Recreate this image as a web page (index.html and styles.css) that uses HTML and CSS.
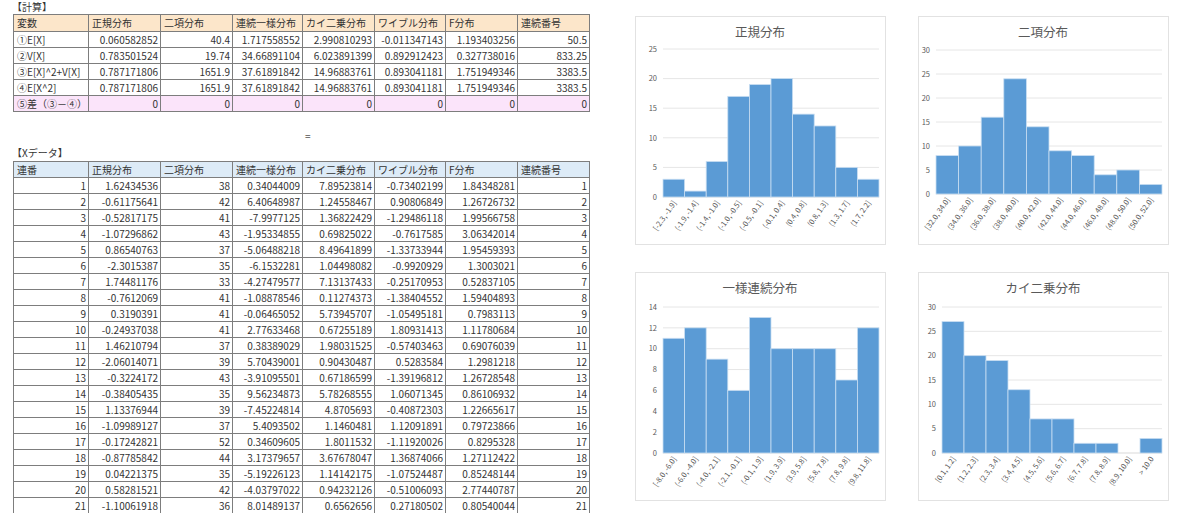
FILE: index.html
```html
<!DOCTYPE html>
<html lang="ja">
<head>
<meta charset="utf-8">
<title>分布</title>
<link rel="stylesheet" href="styles.css">
</head>
<body>
<div class="page">
  <section class="sheet">
    <div class="caption">【計算】</div>
    <table class="grid calc">
      <colgroup><col class="c1"><col class="c2"><col class="c3"><col class="c4"><col class="c5"><col class="c6"><col class="c7"><col class="c8"></colgroup>
      <thead>
        <tr><th>変数</th><th>正規分布</th><th>二項分布</th><th>連続一様分布</th><th>カイ二乗分布</th><th>ワイブル分布</th><th>F分布</th><th>連続番号</th></tr>
      </thead>
      <tbody>
        <tr><td class="l">①E[X]</td><td>0.060582852</td><td>40.4</td><td>1.717558552</td><td>2.990810293</td><td>-0.011347143</td><td>1.193403256</td><td>50.5</td></tr>
        <tr><td class="l">②V[X]</td><td>0.783501524</td><td>19.74</td><td>34.66891104</td><td>6.023891399</td><td>0.892912423</td><td>0.327738016</td><td>833.25</td></tr>
        <tr><td class="l">③E[X]^2+V[X]</td><td>0.787171806</td><td>1651.9</td><td>37.61891842</td><td>14.96883761</td><td>0.893041181</td><td>1.751949346</td><td>3383.5</td></tr>
        <tr><td class="l">④E[X^2]</td><td>0.787171806</td><td>1651.9</td><td>37.61891842</td><td>14.96883761</td><td>0.893041181</td><td>1.751949346</td><td>3383.5</td></tr>
        <tr class="diff"><td class="l">⑤差（③－④）</td><td>0</td><td>0</td><td>0</td><td>0</td><td>0</td><td>0</td><td>0</td></tr>
      </tbody>
    </table>
    <div class="eq">=</div>
    <div class="caption caption-x">【Xデータ】</div>
    <table class="grid xdata">
      <colgroup><col class="c1"><col class="c2"><col class="c3"><col class="c4"><col class="c5"><col class="c6"><col class="c7"><col class="c8"></colgroup>
      <thead>
        <tr><th>連番</th><th>正規分布</th><th>二項分布</th><th>連続一様分布</th><th>カイ二乗分布</th><th>ワイブル分布</th><th>F分布</th><th>連続番号</th></tr>
      </thead>
      <tbody>
        <tr><td>1</td><td>1.62434536</td><td>38</td><td>0.34044009</td><td>7.89523814</td><td>-0.73402199</td><td>1.84348281</td><td>1</td></tr>
        <tr><td>2</td><td>-0.61175641</td><td>42</td><td>6.40648987</td><td>1.24558467</td><td>0.90806849</td><td>1.26726732</td><td>2</td></tr>
        <tr><td>3</td><td>-0.52817175</td><td>41</td><td>-7.9977125</td><td>1.36822429</td><td>-1.29486118</td><td>1.99566758</td><td>3</td></tr>
        <tr><td>4</td><td>-1.07296862</td><td>43</td><td>-1.95334855</td><td>0.69825022</td><td>-0.7617585</td><td>3.06342014</td><td>4</td></tr>
        <tr><td>5</td><td>0.86540763</td><td>37</td><td>-5.06488218</td><td>8.49641899</td><td>-1.33733944</td><td>1.95459393</td><td>5</td></tr>
        <tr><td>6</td><td>-2.3015387</td><td>35</td><td>-6.1532281</td><td>1.04498082</td><td>-0.9920929</td><td>1.3003021</td><td>6</td></tr>
        <tr><td>7</td><td>1.74481176</td><td>33</td><td>-4.27479577</td><td>7.13137433</td><td>-0.25170953</td><td>0.52837105</td><td>7</td></tr>
        <tr><td>8</td><td>-0.7612069</td><td>41</td><td>-1.08878546</td><td>0.11274373</td><td>-1.38404552</td><td>1.59404893</td><td>8</td></tr>
        <tr><td>9</td><td>0.3190391</td><td>41</td><td>-0.06465052</td><td>5.73945707</td><td>-1.05495181</td><td>0.7983113</td><td>9</td></tr>
        <tr><td>10</td><td>-0.24937038</td><td>41</td><td>2.77633468</td><td>0.67255189</td><td>1.80931413</td><td>1.11780684</td><td>10</td></tr>
        <tr><td>11</td><td>1.46210794</td><td>37</td><td>0.38389029</td><td>1.98031525</td><td>-0.57403463</td><td>0.69076039</td><td>11</td></tr>
        <tr><td>12</td><td>-2.06014071</td><td>39</td><td>5.70439001</td><td>0.90430487</td><td>0.5283584</td><td>1.2981218</td><td>12</td></tr>
        <tr><td>13</td><td>-0.3224172</td><td>43</td><td>-3.91095501</td><td>0.67186599</td><td>-1.39196812</td><td>1.26728548</td><td>13</td></tr>
        <tr><td>14</td><td>-0.38405435</td><td>35</td><td>9.56234873</td><td>5.78268555</td><td>1.06071345</td><td>0.86106932</td><td>14</td></tr>
        <tr><td>15</td><td>1.13376944</td><td>39</td><td>-7.45224814</td><td>4.8705693</td><td>-0.40872303</td><td>1.22665617</td><td>15</td></tr>
        <tr><td>16</td><td>-1.09989127</td><td>37</td><td>5.4093502</td><td>1.1460481</td><td>1.12091891</td><td>0.79723866</td><td>16</td></tr>
        <tr><td>17</td><td>-0.17242821</td><td>52</td><td>0.34609605</td><td>1.8011532</td><td>-1.11920026</td><td>0.8295328</td><td>17</td></tr>
        <tr><td>18</td><td>-0.87785842</td><td>44</td><td>3.17379657</td><td>3.67678047</td><td>1.36874066</td><td>1.27112422</td><td>18</td></tr>
        <tr><td>19</td><td>0.04221375</td><td>35</td><td>-5.19226123</td><td>1.14142175</td><td>-1.07524487</td><td>0.85248144</td><td>19</td></tr>
        <tr><td>20</td><td>0.58281521</td><td>42</td><td>-4.03797022</td><td>0.94232126</td><td>-0.51006093</td><td>2.77440787</td><td>20</td></tr>
        <tr><td>21</td><td>-1.10061918</td><td>36</td><td>8.01489137</td><td>0.6562656</td><td>0.27180502</td><td>0.80540044</td><td>21</td></tr>
      </tbody>
    </table>
  </section>
  <section class="charts">
    <div class="card" data-chart="0"></div>
    <div class="card" data-chart="1"></div>
    <div class="card" data-chart="2"></div>
    <div class="card" data-chart="3"></div>
  </section>
</div>
<script src="app.js"></script>
</body>
</html>
```

FILE: styles.css
```css
* { box-sizing: border-box; }
html, body { margin: 0; padding: 0; background: #fff; }
body {
  font-family: "Noto Sans CJK JP", "Noto Sans", sans-serif;
  color: #333;
  font-size: 10px;
  overflow: hidden;
}
.page {
  display: flex;
  align-items: flex-start;
  width: 1200px;
  height: 513px;
}
.sheet {
  width: 589px;
  padding-left: 13px;
  flex: none;
}
.caption {
  height: 14px;
  line-height: 14px;
  font-size: 10px;
  color: #333;
  margin-left: -1px;
}
.caption-x {
  height: 17px;
  line-height: 17px;
}
.eq {
  height: 16px;
  line-height: 16px;
  margin-top: 16px;
  padding-left: 292px;
  color: #555;
}
.grid {
  border-collapse: collapse;
  table-layout: fixed;
  width: 576px;
}
.grid .c1 { width: 75px; }
.grid .c2 { width: 72px; }
.grid .c3 { width: 72px; }
.grid .c4 { width: 70px; }
.grid .c5 { width: 72px; }
.grid .c6 { width: 71px; }
.grid .c7 { width: 72px; }
.grid .c8 { width: 72px; }
.grid th, .grid td {
  border: 1px solid #7d7d7d;
  height: 16px;
  padding: 0 2px 0 3px;
  line-height: 14px;
  font-size: 10px;
  font-weight: normal;
  white-space: nowrap;
  overflow: hidden;
  color: #333;
}
.grid th { text-align: left; }
.grid td { text-align: right; }
.grid td.l { text-align: left; }
.calc thead th {
  background: #fce6ca;
  height: 17px;
}
.calc .diff td { background: #fbe4fa; }
.xdata thead th { background: #ddebf7; }

.charts {
  margin-left: 46px;
  margin-top: 16px;
  display: grid;
  grid-template-columns: 251px 251px;
  grid-template-rows: 229px 229px;
  column-gap: 32px;
  row-gap: 27px;
}
.card {
  border: 1px solid #e2e2e2;
  background: #fff;
  width: 251px;
  height: 229px;
}
.card svg { display: block; }
.card .ttl { font-size: 12.5px; fill: #595959; }
.card .yl { font-size: 7.5px; fill: #595959; }
.card .xl { font-size: 7.4px; fill: #595959; }
```

FILE: app.js
```javascript
var charts = [
  { title: '正規分布', max: 25, step: 5, left: 27, right: 243, top: 32, bottom: 180,
    data: [3, 1, 6, 17, 19, 20, 14, 12, 5, 3],
    labels: ['[-2.3, -1.9]', '(-1.9, -1.4]', '(-1.4, -1.0]', '(-1.0, -0.5]', '(-0.5, -0.1]', '(-0.1, 0.4]', '(0.4, 0.8]', '(0.8, 1.3]', '(1.3, 1.7]', '(1.7, 2.2]'] },
  { title: '二項分布', max: 30, step: 5, left: 17, right: 243, top: 33, bottom: 177,
    data: [8, 10, 16, 24, 14, 9, 8, 4, 5, 2],
    labels: ['[32.0, 34.0]', '(34.0, 36.0]', '(36.0, 38.0]', '(38.0, 40.0]', '(40.0, 42.0]', '(42.0, 44.0]', '(44.0, 46.0]', '(46.0, 48.0]', '(48.0, 50.0]', '(50.0, 52.0]'] },
  { title: '一様連続分布', max: 14, step: 2, left: 27, right: 243, top: 34, bottom: 180,
    data: [11, 12, 9, 6, 13, 10, 10, 10, 7, 12],
    labels: ['[-8.0, -6.0]', '(-6.0, -4.0]', '(-4.0, -2.1]', '(-2.1, -0.1]', '(-0.1, 1.9]', '(1.9, 3.9]', '(3.9, 5.8]', '(5.8, 7.8]', '(7.8, 9.8]', '(9.8, 11.8]'] },
  { title: 'カイ二乗分布', max: 30, step: 5, left: 23, right: 243, top: 34, bottom: 180,
    data: [27, 20, 19, 13, 7, 7, 2, 2, 0, 3],
    labels: ['[0.1, 1.2]', '(1.2, 2.3]', '(2.3, 3.4]', '(3.4, 4.5]', '(4.5, 5.6]', '(5.6, 6.7]', '(6.7, 7.8]', '(7.8, 8.9]', '(8.9, 10.0]', '> 10.0'] }
];

function buildChart(c) {
  var W = 249, H = 227;
  var s = '<svg xmlns="http://www.w3.org/2000/svg" width="' + W + '" height="' + H + '" viewBox="0 0 ' + W + ' ' + H + '">';
  s += '<text class="ttl" x="124" y="20" text-anchor="middle">' + c.title + '</text>';
  var ph = c.bottom - c.top;
  for (var v = 0; v <= c.max; v += c.step) {
    var y = c.bottom - ph * v / c.max;
    s += '<line x1="' + c.left + '" x2="' + c.right + '" y1="' + y + '" y2="' + y + '" stroke="' + (v === 0 ? '#d9d9d9' : '#e6e6e6') + '" stroke-width="1"/>';
    s += '<text class="yl" x="' + (c.left - 6) + '" y="' + (y + 2.7) + '" text-anchor="end">' + v + '</text>';
  }
  var n = c.data.length;
  var bw = (c.right - c.left) / n;
  for (var i = 0; i < n; i++) {
    var h = ph * c.data[i] / c.max;
    if (h > 0) {
      s += '<rect x="' + (c.left + i * bw) + '" y="' + (c.bottom - h) + '" width="' + bw + '" height="' + h + '" fill="#5b9bd5" stroke="#c9def2" stroke-width="0.8"/>';
    }
  }
  for (var j = 0; j < n; j++) {
    var cx = c.left + j * bw + bw / 2 + 3;
    var ly = c.bottom + 6;
    s += '<text class="xl" x="' + cx + '" y="' + ly + '" text-anchor="end" transform="rotate(-55 ' + cx + ' ' + ly + ')">' + c.labels[j] + '</text>';
  }
  s += '</svg>';
  return s;
}

var cards = document.querySelectorAll('.card');
for (var k = 0; k < cards.length; k++) {
  var idx = parseInt(cards[k].getAttribute('data-chart'), 10);
  cards[k].innerHTML = buildChart(charts[idx]);
}
```
